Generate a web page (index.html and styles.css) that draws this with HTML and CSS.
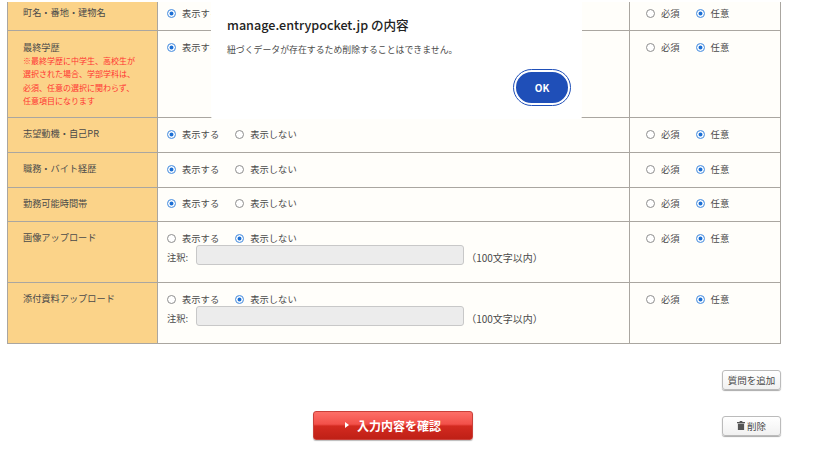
FILE: index.html
```html
<!DOCTYPE html>
<html lang="ja">
<head>
<meta charset="utf-8">
<title>項目設定</title>
<link rel="stylesheet" href="styles.css">
</head>
<body>
<div class="ticks"><i></i><i></i><i></i><i></i><i></i><i></i><i></i><i></i><i></i><i></i><i></i><i></i></div>
<table class="form">
<colgroup><col class="c1"><col class="c2"><col class="c3"></colgroup>
<tr class="h1"><th>町名・番地・建物名</th>
<td><div class="radios"><label><span class="r on"></span>表示する</label><label><span class="r"></span>表示しない</label></div></td>
<td><div class="radios req"><label><span class="r"></span>必須</label><label><span class="r on"></span>任意</label></div></td></tr>
<tr class="h2"><th>最終学歴<p class="note">※最終学歴に中学生、高校生が<br>選択された場合、学部学科は、<br>必須、任意の選択に関わらず、<br>任意項目になります</p></th>
<td><div class="radios"><label><span class="r on"></span>表示する</label><label><span class="r"></span>表示しない</label></div></td>
<td><div class="radios req"><label><span class="r"></span>必須</label><label><span class="r on"></span>任意</label></div></td></tr>
<tr class="h3"><th>志望動機・自己PR</th>
<td><div class="radios"><label><span class="r on"></span>表示する</label><label><span class="r"></span>表示しない</label></div></td>
<td><div class="radios req"><label><span class="r"></span>必須</label><label><span class="r on"></span>任意</label></div></td></tr>
<tr class="h3"><th>職務・バイト経歴</th>
<td><div class="radios"><label><span class="r on"></span>表示する</label><label><span class="r"></span>表示しない</label></div></td>
<td><div class="radios req"><label><span class="r"></span>必須</label><label><span class="r on"></span>任意</label></div></td></tr>
<tr class="h3 short"><th>勤務可能時間帯</th>
<td><div class="radios"><label><span class="r on"></span>表示する</label><label><span class="r"></span>表示しない</label></div></td>
<td><div class="radios req"><label><span class="r"></span>必須</label><label><span class="r on"></span>任意</label></div></td></tr>
<tr class="h4"><th>画像アップロード</th>
<td><div class="radios"><label><span class="r"></span>表示する</label><label><span class="r on"></span>表示しない</label></div>
<div class="memo"><span class="cap">注釈:</span><span class="field"></span><span class="limit">（100文字以内）</span></div></td>
<td><div class="radios req"><label><span class="r"></span>必須</label><label><span class="r on"></span>任意</label></div></td></tr>
<tr class="h4"><th>添付資料アップロード</th>
<td><div class="radios"><label><span class="r"></span>表示する</label><label><span class="r on"></span>表示しない</label></div>
<div class="memo"><span class="cap">注釈:</span><span class="field"></span><span class="limit">（100文字以内）</span></div></td>
<td><div class="radios req"><label><span class="r"></span>必須</label><label><span class="r on"></span>任意</label></div></td></tr>
</table>
<div class="add-row"><button class="small">質問を追加</button></div>
<div class="actions">
<button class="confirm"><svg class="arrow" width="4" height="6" viewBox="0 0 4 6"><path d="M0 0l4 3-4 3z" fill="#fff"/></svg>入力内容を確認</button>
<button class="small del"><svg width="8" height="9" viewBox="0 0 9 10"><path d="M3 0h3v1h3v1.4H0V1h3zM1 3h7v7H1z" fill="#555"/></svg>削除</button>
</div>
<div class="dialog">
<div class="d-title">manage.entrypocket.jp の内容</div>
<div class="d-msg">紐づくデータが存在するため削除することはできません。</div>
<button class="ok">OK</button>
</div>
</body>
</html>
```
FILE: styles.css
```css
* { box-sizing: border-box; }
html, body { margin: 0; padding: 0; }
body {
  width: 814px; height: 460px; overflow: hidden; background: #fff; position: relative;
  font-family: "Noto Sans CJK JP", "Noto Sans", sans-serif; font-size: 9.3px; color: #4a4a4a;
}
.ticks { height: 2px; display: flex; padding-left: 27px; }
.ticks i { display: block; width: 1px; height: 2px; background: #ddd; margin-right: 68px; }
.form {
  margin-left: 7px; width: 773px; table-layout: fixed; border-collapse: collapse;
  background: #fffefa;
}
.c1 { width: 150px; } .c2 { width: 472px; } .c3 { width: 151px; }
.form th, .form td { border: 1px solid #aaa6a0; vertical-align: top; padding: 0; }
.form tr:first-child th, .form tr:first-child td { border-top: 0; }
.form th {
  background: #fbd389; font-weight: 400; font-size: 9.2px; text-align: left; padding: 2px 0 0 15px; line-height: 17px; color: #4a4a4a;
}
.h1 { height: 28px; } .h2 { height: 87px; } .h3 { height: 35px; } .h3.short { height: 34px; } .h4 { height: 61px; }
.h2 th { padding-top: 8px; } .h3 th, .h4 th { padding-top: 7px; }
.note { margin: -2px 0 0; color: #f33; font-size: 8px; line-height: 13.6px; }
.radios { display: flex; gap: 16px; padding: 3px 0 0 9px; line-height: 17px; }
.req { padding-left: 16px; }
.h2 .radios, .h3 .radios, .h4 .radios { padding-top: 8px; }
.short .radios { padding-top: 7px; }
.radios label { display: flex; align-items: center; gap: 6px; }
.r {
  width: 9px; height: 9px; border-radius: 50%; border: 1px solid #8e8e8e; background: #fff; display: block;
}
.r.on { border: 1px solid #6ea6e6; background: #1c6fd4; box-shadow: inset 0 0 0 1.5px #fff; }
.memo { display: flex; align-items: center; padding: 0 0 0 9px; margin-top: -2px; height: 20px; }
.cap { padding-top: 5px; }
.field {
  display: block; width: 268px; height: 20px; margin-left: 8px; background: #ececec;
  border: 1px solid #c8c8c8; border-radius: 3px;
}
.limit { margin-left: 2px; padding-top: 5px; font-size: 10px; }
.add-row { display: flex; justify-content: flex-end; padding: 26px 33px 0 0; }
.small {
  font-family: inherit; font-size: 9.5px; color: #4a4a4a; height: 20px; width: 59px; padding: 0;
  background: linear-gradient(#fff, #f1f1f1); border: 1px solid #bbb; border-radius: 3px;
  box-shadow: 0 1px 1px #aaa; display: flex; align-items: center; justify-content: center; gap: 2px;
}
.actions { position: relative; display: flex; justify-content: flex-end; padding: 26px 33px 0 0; height: 56px; }
.confirm {
  position: absolute; left: 313px; top: 21px; width: 160px; height: 29px; padding: 0;
  font-family: inherit; font-size: 12px; font-weight: 700; color: #fff;
  background: linear-gradient(#fd6f67 0, #f2504a 45%, #d32a20 52%, #bf2016 100%);
  border: 1px solid #c9403a; border-radius: 3px; box-shadow: 0 1px 1px #bbb;
  display: flex; align-items: center; justify-content: center; gap: 8px;
}
.dialog {
  position: absolute; left: 211px; top: 2px; width: 371px; height: 117px; background: #fff;
  border-radius: 0 0 3px 3px;
}
.d-title { position: absolute; left: 16px; top: 13px; font-size: 12.6px; font-weight: 500; color: #222; line-height: 20px; }
.d-msg { position: absolute; left: 16px; top: 40px; font-size: 8.9px; color: #4a4a4a; line-height: 15px; }
.ok {
  position: absolute; left: 303px; top: 68px; width: 56px; height: 35px; padding: 0;
  font-family: inherit; font-size: 10px; font-weight: 700; color: #fff;
  background: #1f4fb8; border: 2px solid #fff; border-radius: 19px; outline: 1.5px solid #1f4fb8;
}
```
